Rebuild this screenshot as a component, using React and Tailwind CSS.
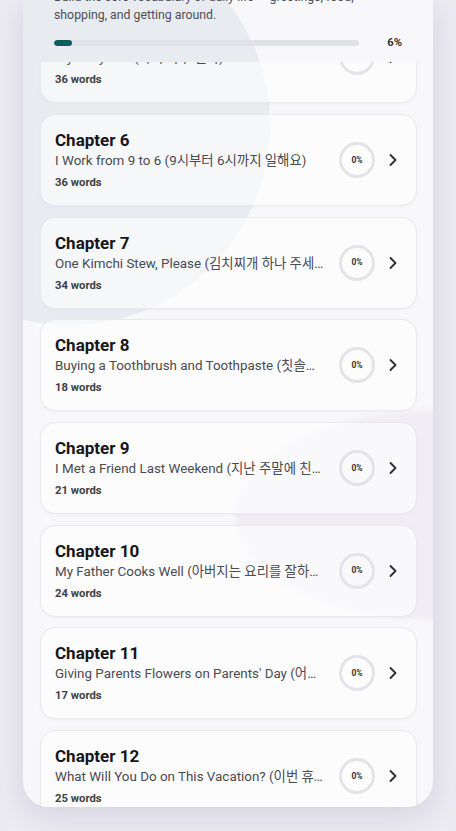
import React from 'react';
import { ChevronRight } from 'lucide-react';

const chapters = [
  { n: 5, title: 'My Daily Life (나의 하루 일과)', words: 36 },
  { n: 6, title: 'I Work from 9 to 6 (9시부터 6시까지 일해요)', words: 36 },
  { n: 7, title: 'One Kimchi Stew, Please (김치찌개 하나 주세요)', words: 34 },
  { n: 8, title: 'Buying a Toothbrush and Toothpaste (칫솔과 치약 사기)', words: 18 },
  { n: 9, title: 'I Met a Friend Last Weekend (지난 주말에 친구를 만났어요)', words: 21 },
  { n: 10, title: 'My Father Cooks Well (아버지는 요리를 잘하세요)', words: 24 },
  { n: 11, title: "Giving Parents Flowers on Parents' Day (어버이날에 부모님께 꽃 드리기)", words: 17 },
  { n: 12, title: 'What Will You Do on This Vacation? (이번 휴가에 뭐 할 거예요?)', words: 25 },
  { n: 13, title: 'At the Hospital (병원에서)', words: 20 },
];

function ChapterCard({ ch, first }) {
  return (
    <div
      className={`flex shrink-0 items-center rounded-[15px] border border-[#e8e8ee] bg-white/60 pl-[14px] pr-[13px] pt-[14px] pb-[14px] shadow-[0_1px_3px_rgba(60,60,90,0.04)] ${first ? '-mt-[50.67px]' : ''}`}
    >
      <div className="min-w-0 flex-1">
        <div className="text-[17px] font-bold leading-[22px] text-[#16161a]">Chapter {ch.n}</div>
        <div className="truncate text-[13.4px] leading-5 text-[#4a4a50]">{ch.title}</div>
        <div className="mt-1 text-[11.3px] font-bold leading-4 text-[#3f3f45]">{ch.words} words</div>
      </div>
      <div className="ml-3 flex h-9 w-9 shrink-0 items-center justify-center rounded-full border-[3px] border-[#e4e4e8]">
        <span className="text-[8.5px] font-bold text-[#333]">0%</span>
      </div>
      <ChevronRight className="ml-2 shrink-0 text-[#2f2f35]" size={20} strokeWidth={2.25} />
    </div>
  );
}

export default function App() {
  return (
    <div className="h-[831px] overflow-hidden bg-[#ecebf2] px-[23px] font-['Roboto','Noto_Sans_CJK_KR',sans-serif]">
      <div className="relative h-[807px] overflow-hidden rounded-b-[26px] bg-[#f8f8fa] shadow-[0_8px_30px_rgba(90,80,130,0.16)]">
        {/* soft background shapes */}
        <div className="absolute -left-[153px] -top-[75px] h-[400px] w-[400px] rounded-full bg-[#e8ebf0]" />
        <div className="absolute left-[212px] top-[410px] h-[210px] w-[410px] rounded-[50%] bg-[#f0edf5] blur-[2px]" />

        <div className="relative flex h-full flex-col">
          <div className="px-[31px] pb-[11px]">
            <p className="-mt-[12px] text-[12.3px] leading-[18px] text-[#4e4e55]">
              Build the core vocabulary of daily life — greetings, food, shopping, and getting around.
            </p>
            <div className="mt-[11px] flex h-4 items-center">
              <div className="h-[6px] flex-1 overflow-hidden rounded-full bg-[#dfe1e6]">
                <div className="h-full w-[6%] rounded-full bg-[#0e5d5c]" />
              </div>
              <span className="ml-[28px] text-[11.3px] font-bold text-[#333338]">6%</span>
            </div>
          </div>

          <div className="flex flex-1 flex-col gap-[10.67px] overflow-hidden pl-[17px] pr-[16px]">
            {chapters.map((ch, i) => (
              <ChapterCard key={ch.n} ch={ch} first={i === 0} />
            ))}
          </div>
        </div>
      </div>
    </div>
  );
}
